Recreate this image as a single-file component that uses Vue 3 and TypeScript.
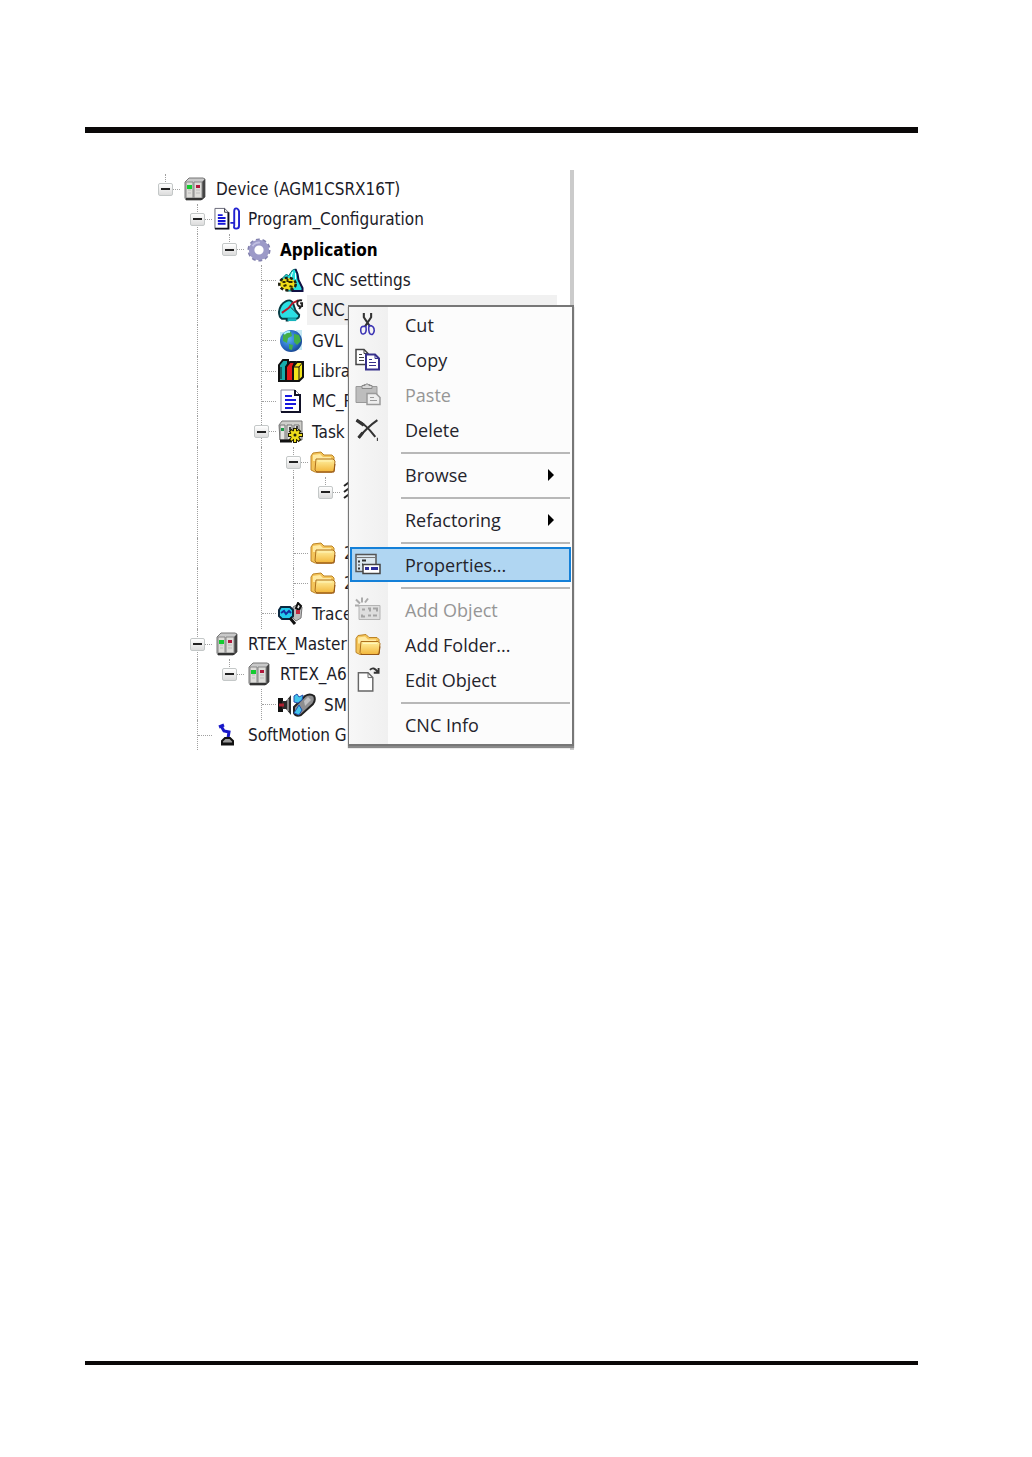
<script setup lang="ts">
import { ref } from 'vue'

interface TreeRow {
  level: number
  label: string
  icon: string
  guides: number[]
  parent?: boolean
  bold?: boolean
  selected?: boolean
  wide?: boolean
}

interface MenuEntry {
  label?: string
  icon?: string
  disabled?: boolean
  submenu?: boolean
}

const rows: TreeRow[] = [
  { level: 0, label: 'Device (AGM1CSRX16T)', icon: 'device', guides: [], parent: true },
  { level: 1, label: 'Program_Configuration', icon: 'program', guides: [1], parent: true },
  { level: 2, label: 'Application', icon: 'gear', guides: [1], parent: true, bold: true },
  { level: 3, label: 'CNC settings', icon: 'cncset', guides: [1, 3] },
  { level: 3, label: 'CNC_', icon: 'cnc', guides: [1, 3], selected: true },
  { level: 3, label: 'GVL', icon: 'globe', guides: [1, 3] },
  { level: 3, label: 'Libra', icon: 'books', guides: [1, 3] },
  { level: 3, label: 'MC_P', icon: 'doc', guides: [1, 3] },
  { level: 3, label: 'Task', icon: 'task', guides: [1, 3], parent: true },
  { level: 4, label: '', icon: 'folder', guides: [1, 3, 4], parent: true },
  { level: 5, label: '', icon: 'wave', guides: [1, 3, 4], parent: true },
  { level: 5, label: '', icon: '', guides: [1, 3, 4] },
  { level: 4, label: '2', icon: 'folder', guides: [1, 3, 4] },
  { level: 4, label: '2', icon: 'folder', guides: [1, 3, 4] },
  { level: 3, label: 'Trace', icon: 'trace', guides: [1, 3] },
  { level: 1, label: 'RTEX_Master', icon: 'device', guides: [1], parent: true },
  { level: 2, label: 'RTEX_A6', icon: 'device', guides: [1], parent: true },
  { level: 3, label: 'SM', icon: 'axis', guides: [1, 3], wide: true },
  { level: 1, label: 'SoftMotion G', icon: 'robot', guides: [1] },
]

const entries: MenuEntry[] = [
  { label: 'Cut', icon: 'cut' },
  { label: 'Copy', icon: 'copy' },
  { label: 'Paste', icon: 'paste', disabled: true },
  { label: 'Delete', icon: 'delete' },
  {},
  { label: 'Browse', submenu: true },
  {},
  { label: 'Refactoring', submenu: true },
  {},
  { label: 'Properties...', icon: 'props' },
  {},
  { label: 'Add Object', icon: 'addobj', disabled: true },
  { label: 'Add Folder...', icon: 'folder' },
  { label: 'Edit Object', icon: 'edit' },
  {},
  { label: 'CNC Info' },
]

const active = ref('Properties...')
</script>

<template>
  <div class="page">
    <svg class="defs" aria-hidden="true">
      <defs>
        <linearGradient id="gold" x1="0" y1="0" x2="0" y2="1">
          <stop offset="0" stop-color="#fff0a0" />
          <stop offset="1" stop-color="#f3b63a" />
        </linearGradient>
        <radialGradient id="sea" cx="0.4" cy="0.4" r="0.7">
          <stop offset="0" stop-color="#58b4f4" />
          <stop offset="0.6" stop-color="#2a6cc4" />
          <stop offset="1" stop-color="#123a80" />
        </radialGradient>
      </defs>
      <symbol id="i-device" viewBox="0 0 24 24">
        <path d="M2 5 6 1h14l2 1v18l-4 3H3l-1-2z" fill="#c9c9c9" stroke="#777" />
        <path d="M19 5l3-3v18l-3 3z" fill="#444" />
        <path d="M3 5h7v16H3zM11 5h8v16h-8z" fill="#deddda" stroke="#888" />
        <path d="M5 13h3M5 16h3M13 13h4M13 16h4" stroke="#bbb" />
        <path d="M4 8h5v4H4z" fill="#14cc30" />
        <path d="M13 8h4v3h-4z" fill="#b0183c" />
        <path d="M3 22h16" stroke="#333" stroke-width="2" />
      </symbol>
      <symbol id="i-program" viewBox="0 0 27 24">
        <path d="M1 1h10l4 4v17H1z" fill="#fff" stroke="#667" />
        <path d="M15 5v17H1" fill="none" stroke="#112" stroke-width="2" />
        <path d="M11 1v4h4" fill="none" stroke="#334" />
        <path d="M4 8h5M4 11h8M4 14h8M4 17h8" stroke="#1414d8" stroke-width="2" />
        <path d="M17 16h4M21 14V4q0-3 2-3t3 3v15q0 3-3 3t-2-3v-5" fill="none" stroke="#2222d0" stroke-width="2" />
      </symbol>
      <symbol id="i-gear" viewBox="0 0 26 26">
        <circle cx="13" cy="13" r="11" fill="none" stroke="#8280ae" stroke-width="3" stroke-dasharray="4 2.9" />
        <circle cx="13" cy="13" r="8" fill="none" stroke="#9c9ac8" stroke-width="6" />
        <path d="M6 9a8 8 0 0 1 8-4" stroke="#c0bfe2" stroke-width="2" fill="none" />
      </symbol>
      <symbol id="i-cncset" viewBox="0 0 25 24">
        <path d="M3 11 8 6l2 2 4-6 3-1 2 5 1 6 4 8v3H8z" fill="#24dede" stroke="#087070" />
        <path d="M17 1l2 5 1 6 4 8v3H13" fill="none" stroke="#114" stroke-width="2" />
        <path d="M14 4l-2 7M17 5v6" stroke="#e8ffff" />
        <ellipse cx="9" cy="16" rx="8" ry="6" fill="#f0dc18" stroke="#221" stroke-width="3" stroke-dasharray="3 2" />
        <ellipse cx="9" cy="16" rx="7" ry="5" fill="#f0dc18" />
        <path d="M4 14h3M10 14h4M5 18l3-1M11 18l3 1M9 11v3" stroke="#332c00" stroke-width="2" />
      </symbol>
      <symbol id="i-cnc" viewBox="0 0 27 24">
        <path d="M1 14Q2 6 8 3q6-3 8 3l2 6 4 5q0 4-3 4h-9v2H9v-2H4Q1 19 1 14z" fill="#2be0e4" stroke="#063c44" stroke-width="2" />
        <path d="M10 22h9" stroke="#16b4bc" stroke-width="3" />
        <path d="M4 15l7-5 4-5 6-3" fill="none" stroke="#b81828" stroke-width="2" />
        <path d="M13 9l8 8" stroke="#333" />
        <path d="M25 2q-5-1-5 3t5 3V5h-2M24 8l-2 3" fill="none" stroke="#222" stroke-width="2" />
      </symbol>
      <symbol id="i-globe" viewBox="0 0 24 24">
        <path d="M1 3h6v6H1zM17 1h6v20h-5z" fill="#c4e8f4" />
        <circle cx="12" cy="12" r="11" fill="url(#sea)" />
        <path d="M4 6q4-5 8-3l1 4-4 2-1 5-4-2zM15 5l5 1 2 6-4 4-3-3zM10 15l4 1-1 5-3-1z" fill="#42ae48" />
        <path d="M5 5q3-3 6-2" stroke="#a5f0ff" stroke-width="2" fill="none" />
      </symbol>
      <symbol id="i-books" viewBox="0 0 26 24">
        <path d="M1 6 5 1h5v4L8 8v14H1z" fill="#16acac" stroke="#111" stroke-width="2" />
        <path d="M8 8l4-5h5l-2 5v14H8z" fill="#e21818" stroke="#111" stroke-width="2" />
        <path d="M15 8l4-5h6v15l-4 4h-6z" fill="#f3e31c" stroke="#111" stroke-width="2" />
        <path d="M21 8v14M15 8h6l4-5M3 8v12" stroke="#111" fill="none" />
      </symbol>
      <symbol id="i-doc" viewBox="0 0 24 24">
        <path d="M2 1h14l5 5v17H2z" fill="#fff" stroke="#889" />
        <path d="M16 1v5h5v17H2" fill="none" stroke="#111128" stroke-width="2" />
        <path d="M6 7h7M6 11h11M6 15h11M6 19h8" stroke="#1818e0" stroke-width="2" />
      </symbol>
      <symbol id="i-task" viewBox="0 0 26 24">
        <path d="M1 5 4 1h20v19H2z" fill="#cfcfcb" stroke="#777" />
        <path d="M2 5h5v15H2zM9 5h5v15H9zM16 5h5v15h-5z" fill="#e4e4e0" stroke="#777" />
        <path d="M3 8h3v3H3z" fill="#1a9b48" />
        <path d="M11 7h2v3h-2zM18 6h2v3h-2z" fill="#444" />
        <path d="M2 21h12" stroke="#111" stroke-width="3" />
        <path d="M17 8v15M10 15h15M12 10l10 11M22 10 12 21" stroke="#201c00" stroke-width="4" />
        <path d="M17 9v13M11 15h13M13 11l8 9M21 11l-8 9" stroke="#eedc1a" stroke-width="2" />
        <circle cx="17" cy="15" r="4" fill="#eedc1a" />
        <circle cx="17" cy="15" r="1.5" fill="#221" />
      </symbol>
      <symbol id="i-folder" viewBox="0 0 26 24">
        <path d="M1 6 3 3l8-1 3 3h8l2 2v13l-2 2H5l-4-2z" fill="#f4c55a" stroke="#bd8426" />
        <path d="M3 5l7-1 3 3h8v4H3z" fill="#ffeaa2" />
        <path d="M6 9h17l2 2-1 10-2 1H7l-2-2z" fill="url(#gold)" stroke="#ae701d" />
        <path d="M8 11h14" stroke="#fff4b8" />
        <path d="M6 22h18l1-8" fill="none" stroke="#965717" />
      </symbol>
      <symbol id="i-wave" viewBox="0 0 24 24">
        <path d="M1 6l4-3 5 5M1 12l4-3 5 5M1 18l4-3 5 5" fill="none" stroke="#222" stroke-width="2" />
      </symbol>
      <symbol id="i-trace" viewBox="0 0 26 24">
        <path d="M15 5l5-3 4 3-1 11-5 3-3-3z" fill="#bcbcbc" stroke="#777" />
        <path d="M18 6l2-5 3 3-2 4z" fill="#eee" stroke="#111" stroke-width="2" />
        <path d="M18 8h4v4h-4z" fill="#c02a40" />
        <path d="M3 5h9l3 3v6l-3 3H4l-3-3V8z" fill="#24ccec" stroke="#0c2840" stroke-width="2" />
        <path d="M3 11l3-2 2 3 3-3 2 2" fill="none" stroke="#1530a0" stroke-width="2" />
        <path d="M12 16l5 6" stroke="#111" stroke-width="3" />
      </symbol>
      <symbol id="i-axis" viewBox="0 0 38 24">
        <path d="M0 5h5v14H0z" fill="#111" />
        <path d="M4 8h4l5-6v20l-5-6H4z" fill="#2a2a2a" />
        <path d="M10 6v12" stroke="#ddd" />
        <path d="M1 12h5" stroke="#b02030" stroke-width="3" />
        <path d="M16 14 27 3q5-3 9 0 2 4-1 8L23 22q-5 2-7-2z" fill="#8e8e90" stroke="#222" stroke-width="2" />
        <path d="M16 3l3-2 2 3 4-2-1 5-4 3-4-1zM16 20l5-8 3 5-3 5z" fill="#43c6ec" stroke="#2450b0" />
        <path d="M26 8l4-4 3 3-6 6z" fill="#c0c0c2" />
      </symbol>
      <symbol id="i-robot" viewBox="0 0 24 24">
        <path d="M6 3 9 8l5 1-1 6" fill="none" stroke="#1818c8" stroke-width="3" />
        <path d="M4 4l5-2" stroke="#1818c8" stroke-width="3" />
        <path d="M7 18l3-3h5l3 3v3H7z" fill="#999" stroke="#111" stroke-width="2" />
        <path d="M6 21h13" stroke="#111" stroke-width="3" />
      </symbol>
      <symbol id="i-cut" viewBox="0 0 24 24">
        <path d="M8 1v4l6 9M15 1v4l-6 9" fill="none" stroke="#333" stroke-width="2" />
        <path d="M9 14q-4-1-4 3 0 5 3 4 3-1 2-7zM13 13q5 0 5 5-1 5-4 3-2-3-1-8z" fill="none" stroke="#3c34b4" stroke-width="1.5" />
      </symbol>
      <symbol id="i-copy" viewBox="0 0 26 24">
        <path d="M1 2h8l4 4v11H1z" fill="#fff" stroke="#444" stroke-width="1.5" />
        <path d="M4 7h3M4 10h5M4 13h5M9 2v4h4" stroke="#444" fill="none" />
        <path d="M11 7h9l4 4v11H11z" fill="#fff" stroke="#37318c" stroke-width="2" />
        <path d="M14 12h3M14 15h7M14 18h7M20 7v4h4" stroke="#37318c" fill="none" />
      </symbol>
      <symbol id="i-paste" viewBox="0 0 26 24">
        <path d="M1 4h7l1-2h6l1 2h6v16H1z" fill="#bdbdbd" stroke="#999" />
        <path d="M7 6V3h3l2-2 2 2h3v3z" fill="#d8d8d8" stroke="#888" />
        <path d="M12 11h9l4 4v7H12z" fill="#eee" stroke="#9a9a9a" stroke-width="1.5" />
        <path d="M15 15h4M15 18h7" stroke="#999" />
      </symbol>
      <symbol id="i-delete" viewBox="0 0 24 24">
        <path d="M1 3q8 3 18 16M21 3Q11 10 3 20" fill="none" stroke="#333" stroke-width="2" />
        <path d="M1 3l7 5M3 20l4-5" stroke="#333" stroke-width="3" />
        <path d="M21 20v3" stroke="#333" />
      </symbol>
      <symbol id="i-props" viewBox="0 0 26 24">
        <path d="M1 2h20v17H1z" fill="#dce8f0" stroke="#555" stroke-width="1.5" />
        <path d="M2 5h18" stroke="#777" />
        <path d="M4 8v2M4 12v1M4 15v2M7 8h4M7 12h1" stroke="#333" stroke-width="2" />
        <path d="M8 12h17v9H8z" fill="#fff" stroke="#444" stroke-width="1.5" />
        <path d="M10 16h4M16 16h7" stroke="#2d2d9c" stroke-width="3" />
      </symbol>
      <symbol id="i-addobj" viewBox="0 0 26 24">
        <path d="M4 8h21v14H4z" fill="#dedede" stroke="#b4b4b4" />
        <path d="M7 12h3M13 11h2v3M18 11h4v3M7 17v2h3M13 18h3M18 18h4" fill="none" stroke="#a4a4a4" stroke-width="2" />
        <path d="M1 2l4 4M7 0v5M13 1l-3 4M0 8h4" stroke="#aaa" stroke-width="2" />
      </symbol>
      <symbol id="i-edit" viewBox="0 0 26 26">
        <path d="M3 6h10l5 5v14H3z" fill="#fff" stroke="#666" stroke-width="1.5" />
        <path d="M13 6v5h5" fill="none" stroke="#666" />
        <path d="M15 3q4-4 8 2M24 1v5h-5" fill="none" stroke="#333" stroke-width="2" />
      </symbol>
    </svg>

    <header class="rule top"></header>

    <main class="figure">
      <ul class="tree">
        <li v-for="(row, i) in rows" :key="i" class="row" :class="{ selected: row.selected }">
          <span
            v-for="c in row.level + 1"
            :key="c"
            class="cell"
            :class="{
              guide: row.guides.includes(c - 1),
              stub: row.parent && c - 1 === row.level && !row.guides.includes(c - 1),
              arm: c - 1 === row.level && row.icon,
            }"
          >
            <button v-if="row.parent && c - 1 === row.level" class="toggle" type="button" aria-label="Collapse"></button>
          </span>
          <svg v-if="row.icon" class="icon" :class="{ wide: row.wide }"><use :href="'#i-' + row.icon" /></svg>
          <span class="label" :class="{ bold: row.bold }">{{ row.label }}</span>
        </li>
      </ul>

      <div class="menu" role="menu">
        <template v-for="(e, i) in entries" :key="i">
          <button
            v-if="e.label"
            class="item"
            :class="{ active: active === e.label }"
            type="button"
            role="menuitem"
            :disabled="e.disabled"
            @mouseenter="active = e.label"
          >
            <span class="slot"><svg v-if="e.icon" class="glyph"><use :href="'#i-' + e.icon" /></svg></span>
            <span class="text">{{ e.label }}</span>
            <svg v-if="e.submenu" class="arrow" viewBox="0 0 8 12"><path d="M1 0l6 6-6 6z" fill="#000" /></svg>
          </button>
          <div v-else class="sep" role="separator"></div>
        </template>
      </div>
    </main>

    <footer class="rule bottom"></footer>
  </div>
</template>

<style>
body {
  margin: 0;
  background: #fff;
}
</style>

<style scoped>
.page {
  box-sizing: border-box;
  display: flex;
  flex-direction: column;
  min-height: 100vh;
  padding: 127px 114px 92px 85px;
}
.defs {
  position: absolute;
  width: 0;
  height: 0;
}
.rule {
  background: #0a0808;
}
.top {
  height: 6px;
}
.bottom {
  height: 4px;
  margin-top: auto;
}
.figure {
  position: relative;
  align-self: flex-start;
  box-sizing: border-box;
  width: 425px;
  max-width: 100%;
  margin: 37px 0 0 64px;
  padding-top: 4px;
  border-right: 4px solid #cbcbcb;
}
.tree {
  margin: 0;
  padding: 0;
  list-style: none;
}
.row {
  display: flex;
  align-items: center;
  height: 30px;
}
.row:nth-child(3n) {
  height: 31px;
}
.selected {
  background: linear-gradient(#f1f1f1, #f1f1f1) no-repeat 158px 0 / 250px 100%;
}
.cell {
  position: relative;
  display: flex;
  flex: none;
  align-items: center;
  justify-content: center;
  width: 32px;
  height: 100%;
}
.guide::before,
.stub::before {
  content: '';
  position: absolute;
  top: 0;
  left: 16px;
  height: 100%;
  border-left: 1px dotted #a0a0a0;
}
.stub::before {
  height: 10px;
}
.arm::after {
  content: '';
  position: absolute;
  top: 15px;
  left: 17px;
  width: 14px;
  border-top: 1px dotted #a0a0a0;
}
.toggle {
  position: relative;
  z-index: 1;
  width: 15px;
  height: 13px;
  padding: 0;
  border: 1px solid #c4c8c8;
  border-radius: 2px;
  background: linear-gradient(#222, #222) no-repeat center / 9px 2px, linear-gradient(#fff, #dcdcdc);
}
.icon {
  flex: none;
  width: 26px;
  height: 24px;
  margin: 0 8px 0 1px;
}
.wide {
  width: 38px;
}
.label {
  color: #1c1c28;
  font: 17px/30px 'DejaVu Sans Condensed', 'DejaVu Sans', sans-serif;
  white-space: nowrap;
}
.bold {
  color: #000;
  font-weight: bold;
}
.menu {
  position: absolute;
  top: 135px;
  left: 199px;
  box-sizing: border-box;
  width: 226px;
  padding: 0 1px 2px;
  border: 1px solid #777;
  border-width: 2px 2px 2px 1px;
  background: linear-gradient(90deg, #f7f7f7, #f0f0f0) no-repeat 0 0 / 39px 100%, #fcfcfc;
  box-shadow: 0 2px 1px #8a8a8a;
}
.item {
  display: flex;
  align-items: center;
  box-sizing: border-box;
  width: 100%;
  height: 35px;
  padding: 0 14px 0 3px;
  border: 2px solid transparent;
  background: none;
  color: #24242c;
  font: 18px/24px 'Open Sans', 'Noto Sans', sans-serif;
  text-align: left;
}
.item:disabled {
  color: #969696;
}
.active {
  border-color: #1480d8;
  background: #b0d6f2;
}
.slot {
  flex: none;
  width: 50px;
  height: 25px;
}
.glyph {
  width: 26px;
  height: 25px;
}
.text {
  flex: 1;
  white-space: nowrap;
}
.arrow {
  width: 8px;
  height: 12px;
}
.sep {
  height: 2px;
  margin: 5px 1px 3px 51px;
  background: #b8b8b8;
}
</style>
